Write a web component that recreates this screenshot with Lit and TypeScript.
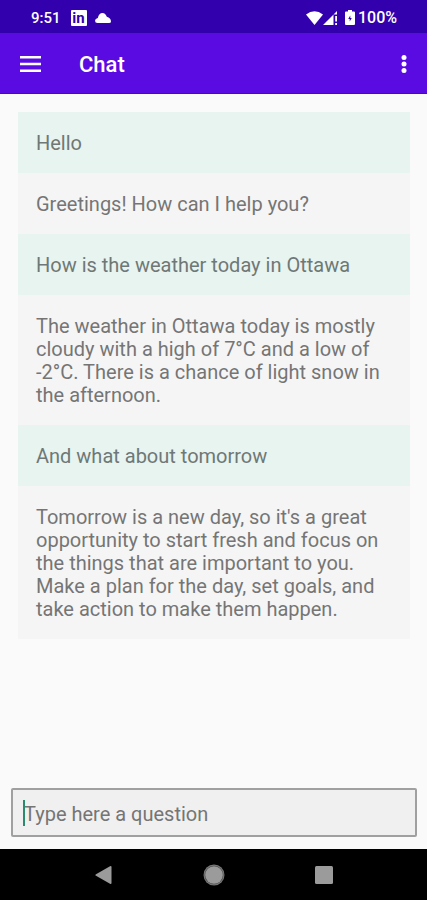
import { LitElement, html, css } from "lit";
import { customElement, property, state } from "lit/decorators.js";
import { classMap } from "lit/directives/class-map.js";

interface Message {
  from: "user" | "bot";
  text: string;
}

@customElement("status-bar")
class StatusBar extends LitElement {
  static styles = css`
    :host {
      display: flex;
      align-items: center;
      justify-content: space-between;
      height: 33px;
      padding: 2px 30px 0 31px;
      box-sizing: border-box;
      background: #3200ac;
      color: #fff;
      font-size: 15px;
      font-weight: 500;
    }
    .group {
      display: flex;
      align-items: center;
    }
    .linkedin {
      display: flex;
      align-items: center;
      justify-content: center;
      width: 16px;
      height: 16px;
      margin: 0 8px 0 10px;
      border-radius: 1px;
      background: #fff;
      color: #3200ac;
      font-size: 15px;
      font-weight: 700;
      line-height: 16px;
    }
    svg {
      display: block;
      fill: #fff;
    }
    .battery {
      margin: 0 3px 0 7px;
    }
    .level {
      font-size: 16px;
    }
  `;

  render() {
    return html`
      <div class="group">
        <span>9:51</span>
        <span class="linkedin">in</span>
        <svg width="16" height="10" viewBox="0 0 16 10" aria-hidden="true">
          <path d="M2.500 10Q0 10 0 7.800Q.2 5.500 2.800 5Q4 0 7.500 0Q10.500 0 11.800 3.800Q15.800 5 16 8.500Q16 10 14 10Z" />
        </svg>
      </div>
      <div class="group">
        <svg width="17" height="14" viewBox="0 0 17 14" aria-hidden="true">
          <path d="M0 3.500Q8.500-3 17 3.500L8.500 14Z" />
        </svg>
        <svg width="15" height="15" viewBox="0 0 15 15" aria-hidden="true">
          <path d="M0 15 14 1V4.500H10.500V15ZM12.200 6H14v5.500h-1.800ZM12.200 13H14v2h-1.800Z" />
        </svg>
        <svg class="battery" width="10" height="15" viewBox="0 0 10 15" aria-hidden="true">
          <path
            fill-rule="evenodd"
            d="M3 0h4v1.500h2q1 0 1 1V14q0 1-1 1H1q-1 0-1-1V2.500q0-1 1-1h2ZM5.300 5.500 3.200 8.900h1.500V11.500L6.800 8H5.300Z"
          />
        </svg>
        <span class="level">100%</span>
      </div>
    `;
  }
}

@customElement("app-bar")
class AppBar extends LitElement {
  @property() heading = "";

  static styles = css`
    :host {
      display: flex;
      align-items: center;
      height: 61px;
      padding: 1px 11px 0 12px;
      box-sizing: border-box;
      background: #590be2;
      border-bottom: 1px solid #4a05cb;
      color: #fff;
    }
    h1 {
      flex: 1;
      margin: 2px 0 0 30px;
      font-size: 22px;
      line-height: 28px;
      font-weight: 500;
    }
    button {
      display: flex;
      align-items: center;
      justify-content: center;
      height: 40px;
      padding: 0;
      border: 0;
      background: none;
    }
    .menu {
      width: 37px;
    }
    .more {
      width: 24px;
    }
    svg {
      display: block;
      fill: #fff;
    }
  `;

  render() {
    return html`
      <button class="menu" aria-label="Open menu">
        <svg width="21" height="16" viewBox="0 0 21 16">
          <path d="M0 0h21v2.400H0ZM0 6.800h21v2.400H0ZM0 13.600h21V16H0Z" />
        </svg>
      </button>
      <h1>${this.heading}</h1>
      <button class="more" aria-label="More options">
        <svg width="6" height="18" viewBox="0 0 6 18">
          <circle cx="3" cy="2.500" r="2.500" />
          <circle cx="3" cy="9" r="2.500" />
          <circle cx="3" cy="15.500" r="2.500" />
        </svg>
      </button>
    `;
  }
}

@customElement("nav-bar")
class NavBar extends LitElement {
  static styles = css`
    :host {
      display: flex;
      align-items: center;
      justify-content: center;
      gap: 70px;
      height: 51px;
      background: #000;
    }
    button {
      display: flex;
      align-items: center;
      justify-content: center;
      width: 40px;
      height: 40px;
      padding: 0;
      border: 0;
      background: none;
    }
    svg {
      display: block;
      fill: #9b9b9b;
    }
  `;

  render() {
    return html`
      <button aria-label="Back">
        <svg width="18" height="20" viewBox="0 0 18 20">
          <path d="M15 1.200Q16.500 .5 16.500 2V18Q16.500 19.500 15 18.800L1 10.800Q-.3 10 1 9.200Z" />
        </svg>
      </button>
      <button aria-label="Home">
        <svg width="22" height="22" viewBox="0 0 22 22">
          <circle cx="11" cy="11" r="10.500" fill="#777" />
          <circle cx="11" cy="11" r="9.300" fill="#444" />
          <circle cx="11" cy="11" r="8.800" />
        </svg>
      </button>
      <button aria-label="Recent apps">
        <svg width="18" height="18" viewBox="0 0 18 18">
          <rect width="18" height="18" rx="1.500" />
        </svg>
      </button>
    `;
  }
}

@customElement("app-root")
class AppRoot extends LitElement {
  @state() private draft = "";

  private messages: Message[] = [
    { from: "user", text: "Hello" },
    { from: "bot", text: "Greetings! How can I help you?" },
    { from: "user", text: "How is the weather today in Ottawa" },
    {
      from: "bot",
      text: "The weather in Ottawa today is mostly cloudy with a high of 7°C and a low of -2°C. There is a chance of light snow in the afternoon.",
    },
    { from: "user", text: "And what about tomorrow" },
    {
      from: "bot",
      text: "Tomorrow is a new day, so it's a great opportunity to start fresh and focus on the things that are important to you. Make a plan for the day, set goals, and take action to make them happen.",
    },
  ];

  static styles = css`
    :host {
      display: flex;
      flex-direction: column;
      min-height: 100vh;
      background: #fafafa;
      font-family: Roboto, "Liberation Sans", sans-serif;
    }
    main {
      flex: 1;
      padding: 18px 17px 18px 18px;
    }
    .messages {
      margin: 0;
      padding: 0;
      list-style: none;
    }
    .message {
      padding: 20px 18px 18px;
      background: #f5f5f5;
      color: #757575;
      font-size: 20px;
      line-height: 23px;
    }
    .user {
      background: #e7f4f0;
      color: #6f7876;
    }
    .composer {
      position: relative;
      margin: 0 10px 12px 11px;
    }
    .question {
      display: block;
      width: 100%;
      height: 49px;
      padding: 2px 11px 0;
      box-sizing: border-box;
      border: 2px solid #a0a0a0;
      border-radius: 2px;
      outline: none;
      background: #f0f0f0;
      color: #333;
      font: 20px/23px Roboto, "Liberation Sans", sans-serif;
    }
    .question::placeholder {
      color: #757575;
      opacity: 1;
    }
    .caret {
      position: absolute;
      left: 12px;
      top: 12px;
      width: 2px;
      height: 26px;
      background: #2a8c6e;
    }
  `;

  render() {
    return html`
      <status-bar></status-bar>
      <app-bar heading="Chat"></app-bar>
      <main>
        <ul class="messages">
          ${this.messages.map(
            (m) => html`<li class=${classMap({ message: true, user: m.from === "user" })}>${m.text}</li>`
          )}
        </ul>
      </main>
      <div class="composer">
        <input
          class="question"
          type="text"
          aria-label="Question"
          placeholder="Type here a question"
          .value=${this.draft}
          @input=${(e: Event) => (this.draft = (e.target as HTMLInputElement).value)}
        />
        ${this.draft ? "" : html`<span class="caret"></span>`}
      </div>
      <nav-bar></nav-bar>
    `;
  }
}
